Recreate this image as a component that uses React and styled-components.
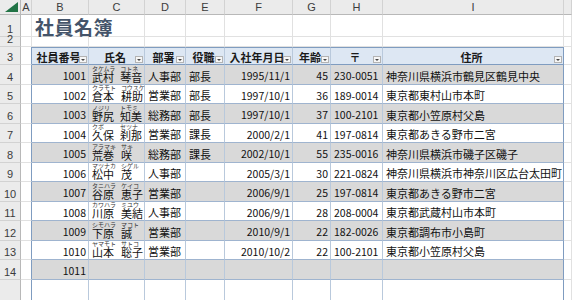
import React from "react";
import styled, { createGlobalStyle } from "styled-components";

const GlobalStyle = createGlobalStyle`
  html, body {
    margin: 0;
    padding: 0;
    background: #fff;
  }
  body {
    font-family: "Noto Sans CJK JP", "Noto Sans", sans-serif;
    overflow: hidden;
  }
  * {
    box-sizing: border-box;
  }
`;

const OUTER = "#7f9cc0";
const INNER_H = "#9fb4cf";
const INNER_V = "#b9c9dc";
const GRID = "#e1e1e1";

const COLS = ["A", "B", "C", "D", "E", "F", "G", "H", "I", ""];

const HEADERS = ["社員番号", "氏名", "部署", "役職", "入社年月日", "年齢", "〒", "住所"];

const ALIGN = ["right", "left", "left", "left", "right", "right", "left", "left"];

const people = [
  ["1001", ["タケムラ", "武村"], ["コトネ", "琴音"], "人事部", "部長", "1995/11/1", "45", "230-0051", "神奈川県横浜市鶴見区鶴見中央"],
  ["1002", ["クラモト", "倉本"], ["コウスケ", "耕助"], "営業部", "部長", "1997/10/1", "36", "189-0014", "東京都東村山市本町"],
  ["1003", ["ノジリ", "野尻"], ["トモミ", "知美"], "総務部", "部長", "1997/10/1", "37", "100-2101", "東京都小笠原村父島"],
  ["1004", ["クボ", "久保"], ["セツナ", "刹那"], "営業部", "課長", "2000/2/1", "41", "197-0814", "東京都あきる野市二宮"],
  ["1005", ["アラマキ", "荒巻"], ["サキ", "咲"], "総務部", "課長", "2002/10/1", "55", "235-0016", "神奈川県横浜市磯子区磯子"],
  ["1006", ["マツナカ", "松中"], ["シゲル", "茂"], "人事部", "", "2005/3/1", "30", "221-0824", "神奈川県横浜市神奈川区広台太田町"],
  ["1007", ["タニハラ", "谷原"], ["ケイコ", "恵子"], "営業部", "", "2006/9/1", "25", "197-0814", "東京都あきる野市二宮"],
  ["1008", ["カワハラ", "川原"], ["ミユウ", "美結"], "人事部", "", "2006/9/1", "28", "208-0004", "東京都武蔵村山市本町"],
  ["1009", ["シモハラ", "下原"], ["マコト", "誠"], "営業部", "", "2010/9/1", "22", "182-0026", "東京都調布市小島町"],
  ["1010", ["ヤマモト", "山本"], ["サトコ", "聡子"], "営業部", "", "2010/10/2", "22", "100-2101", "東京都小笠原村父島"],
  ["1011", null, null, "", "", "", "", "", ""],
  ["", null, null, "", "", "", "", "", ""],
];

const Sheet = styled.div`
  display: grid;
  grid-template-columns: 21px 11px 57px 56px 41px 39px 68px 38px 52px 181px 1fr;
  grid-template-rows: 15px 22px 10px 18px repeat(11, 19.5px) 40px;
  width: 572px;
  height: 300px;
  overflow: hidden;
`;

const Corner = styled.div`
  background: #ebebeb;
  border-right: 1px solid #b8b8b8;
  border-bottom: 1px solid #b8b8b8;
  display: flex;
  align-items: flex-end;
  justify-content: flex-end;
  padding: 0 2px 2px 0;
`;

const ColHead = styled.div`
  background: #ebebeb;
  border-right: 1px solid #d2d2d2;
  border-bottom: 1px solid #b8b8b8;
  font-family: "Liberation Sans", sans-serif;
  font-size: 11px;
  color: #3c3c3c;
  display: flex;
  align-items: center;
  justify-content: center;
  line-height: 1;
`;

const RowHead = styled.div`
  background: #ebebeb;
  border-right: 1px solid #b8b8b8;
  border-bottom: 1px solid #d2d2d2;
  font-family: "Liberation Sans", sans-serif;
  font-size: 11px;
  color: #3c3c3c;
  display: flex;
  align-items: flex-end;
  justify-content: center;
  padding-bottom: 1px;
  line-height: 1;
`;

const Cell = styled.div`
  border-right: 1px solid ${(p) => p.$edge || GRID};
  border-bottom: 1px solid ${(p) => p.$under || GRID};
`;

const TitleCell = styled.div`
  grid-column: span 2;
  border-bottom: 1px solid ${GRID};
  border-right: 1px solid ${GRID};
  display: flex;
  align-items: flex-end;
  padding: 0 0 0 3px;
  font-size: 19px;
  font-weight: 700;
  color: #44546a;
  letter-spacing: 0.5px;
  line-height: 1;
  white-space: nowrap;
`;

const THead = styled.div`
  position: relative;
  background: #dde7f3;
  border-top: 1px solid ${OUTER};
  border-bottom: 1px solid ${OUTER};
  border-right: 1px solid ${(p) => (p.$last ? OUTER : INNER_V)};
  display: flex;
  align-items: center;
  justify-content: center;
  font-size: 11px;
  font-weight: 700;
  color: #1a1a1a;
  line-height: 1;
  white-space: nowrap;
  overflow: hidden;
  padding: 2px 3px 0 0;
`;

const FilterButton = styled.span`
  position: absolute;
  right: 1px;
  bottom: 1px;
  width: 8px;
  height: 7px;
  background: #f6f6f6;
  border: 1px solid #b3b3b3;
  display: flex;
  align-items: center;
  justify-content: center;
  &::after {
    content: "";
    border-left: 2px solid transparent;
    border-right: 2px solid transparent;
    border-top: 2px solid #444;
    margin-top: 1px;
  }
`;

const TCell = styled.div`
  background: ${(p) => (p.$shade ? "#d9d9d9" : "#ffffff")};
  border-bottom: 1px solid ${INNER_H};
  border-right: 1px solid ${(p) => (p.$last ? OUTER : INNER_V)};
  display: flex;
  align-items: flex-end;
  justify-content: ${(p) => (p.$align === "right" ? "flex-end" : "flex-start")};
  padding: 0 2px ${(p) => (p.$name ? "1px" : "2px")} 3px;
  font-size: ${(p) => (p.$num ? "10.5px" : "11px")};
  color: #111;
  line-height: 1;
  white-space: nowrap;
`;

const NameWrap = styled.div`
  display: flex;
  align-items: flex-end;
  gap: 5px;
`;

const NamePart = styled.span`
  display: flex;
  flex-direction: column;
  align-items: flex-start;
  min-width: ${(p) => p.$w || 0}px;
`;

const Kana = styled.span`
  font-size: 6px;
  color: #333;
  white-space: nowrap;
  line-height: 7px;
  height: 7px;
`;

const Kanji = styled.span`
  font-size: 11px;
  line-height: 11px;
`;

function Name({ sei, mei }) {
  return (
    <NameWrap>
      <NamePart $w={23}>
        <Kana>{sei[0]}</Kana>
        <Kanji>{sei[1]}</Kanji>
      </NamePart>
      <NamePart>
        <Kana>{mei[0]}</Kana>
        <Kanji>{mei[1]}</Kanji>
      </NamePart>
    </NameWrap>
  );
}

function CornerMark() {
  return (
    <svg width="13" height="10" viewBox="0 0 13 10">
      <polygon points="13,0 13,10 0,10" fill="#217346" />
    </svg>
  );
}

export default function App() {
  const cells = [];

  // column letters
  cells.push(
    <Corner key="corner">
      <CornerMark />
    </Corner>
  );
  COLS.forEach((c, i) => cells.push(<ColHead key={"ch" + i}>{c}</ColHead>));

  // row 1: title
  cells.push(<RowHead key="r1">1</RowHead>);
  cells.push(<Cell key="r1a" />);
  cells.push(<TitleCell key="title">社員名簿</TitleCell>);
  for (let i = 0; i < 7; i++) cells.push(<Cell key={"r1c" + i} />);

  // row 2: blank
  cells.push(<RowHead key="r2">2</RowHead>);
  for (let i = 0; i < 10; i++) cells.push(<Cell key={"r2c" + i} />);

  // row 3: table header
  cells.push(<RowHead key="r3">3</RowHead>);
  cells.push(<Cell key="r3a" $edge={OUTER} />);
  HEADERS.forEach((h, i) => (
    cells.push(
      <THead key={"h" + i} $last={i === HEADERS.length - 1}>
        {h}
        <FilterButton />
      </THead>
    )
  ));
  cells.push(<Cell key="r3j" />);

  // data rows (row 15 is only partly on screen, its number falls below the edge)
  people.forEach((p, r) => {
    const rowNo = r + 4;
    const shade = r % 2 === 0;
    cells.push(<RowHead key={"rh" + rowNo}>{rowNo <= 14 ? rowNo : ""}</RowHead>);
    cells.push(<Cell key={"a" + rowNo} $edge={OUTER} />);
    const values = [p[0], p[1] ? <Name sei={p[1]} mei={p[2]} /> : "", p[3], p[4], p[5], p[6], p[7], p[8]];
    values.forEach((v, c) => (
      cells.push(
        <TCell
          key={"d" + rowNo + "-" + c}
          $shade={shade}
          $align={ALIGN[c]}
          $name={c === 1}
          $num={c === 0 || c === 4 || c === 5 || c === 6}
          $last={c === values.length - 1}
        >
          {v}
        </TCell>
      )
    ));
    cells.push(<Cell key={"j" + rowNo} />);
  });

  return (
    <>
      <GlobalStyle />
      <Sheet>{cells}</Sheet>
    </>
  );
}
